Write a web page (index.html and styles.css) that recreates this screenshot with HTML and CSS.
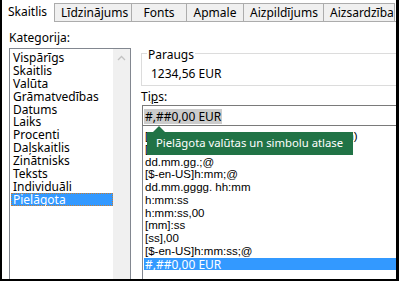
FILE: index.html
```html
<!DOCTYPE html>
<html lang="lv">
<head>
<meta charset="utf-8">
<link rel="stylesheet" href="styles.css">
</head>
<body>
<div class="frame">
  <div class="tabs">
    <div class="tab active">Skaitlis</div>
    <div class="tab">Līdzinājums</div>
    <div class="tab">Fonts</div>
    <div class="tab">Apmale</div>
    <div class="tab">Aizpildījums</div>
    <div class="tab">Aizsardzība</div>
    <div class="tab-rest"></div>
  </div>
  <div class="content">
    <div class="left">
      <div class="label">Kategori<u>j</u>a:</div>
      <div class="catbox">
        <ul class="cats">
          <li>Vispārīgs</li>
          <li>Skaitlis</li>
          <li>Valūta</li>
          <li>Grāmatvedības</li>
          <li>Datums</li>
          <li>Laiks</li>
          <li>Procenti</li>
          <li>Daļskaitlis</li>
          <li>Zinātnisks</li>
          <li>Teksts</li>
          <li>Individuāli</li>
          <li class="sel">Pielāgota</li>
        </ul>
        <div class="scroll">
          <svg class="arrow" width="9" height="6" viewBox="0 0 9 6"><path d="M1 5 L4.5 1.5 L8 5" fill="none" stroke="#c2c2c2" stroke-width="1.3"/></svg>
        </div>
      </div>
    </div>
    <div class="right">
      <div class="sample">
        <div class="sample-head"><span class="sample-title">Paraugs</span></div>
        <div class="sample-body">1234,56 EUR</div>
      </div>
      <div class="label tips">Ti<u>p</u>s:</div>
      <div class="input"><span class="hl">#,##0,00 EUR</span></div>
      <div class="fmtbox">
        <ul class="fmts">
          <li>[$-426]dddd, d. mmmm yyyy. (ddd, h:mm)</li>
          <li>[$-en-US]d-mmm-yy;@</li>
          <li>dd.mm.gg.;@</li>
          <li>[$-en-US]h:mm;@</li>
          <li>dd.mm.gggg. hh:mm</li>
          <li>h:mm:ss</li>
          <li>h:mm:ss,00</li>
          <li>[mm]:ss</li>
          <li>[ss],00</li>
          <li>[$-en-US]h:mm:ss;@</li>
          <li class="sel">#,##0,00 EUR</li>
        </ul>
        <div class="tooltip">Pielāgota valūtas un simbolu atlase</div>
      </div>
    </div>
  </div>
</div>
</body>
</html>
```

FILE: styles.css
```css
* { box-sizing: border-box; }
html, body { margin: 0; padding: 0; }
body {
  width: 399px;
  height: 281px;
  overflow: hidden;
  background: #fff;
  font-family: "Noto Sans", "Open Sans", sans-serif;
  font-size: 12px;
  color: #000;
}
.frame {
  width: 399px;
  height: 281px;
  border-left: 2px solid #000;
  border-right: 3px solid #000;
  border-bottom: 2px solid #000;
  display: flex;
  flex-direction: column;
  overflow: hidden;
}
.tabs {
  display: flex;
  height: 22px;
  flex: none;
}
.tab {
  height: 19px;
  margin-top: 3px;
  border: 1px solid #acacac;
  border-left: none;
  background: #f0f0f0;
  padding: 0 6px;
  line-height: 17px;
  text-align: center;
  white-space: nowrap;
  flex: none;
}
.tab:nth-child(2) { border-left: 1px solid #acacac; width: 78px; }
.tab:nth-child(3) { width: 55px; }
.tab:nth-child(4) { width: 57px; }
.tab:nth-child(5) { width: 80px; }
.tab:nth-child(6) { width: 71px; }
.tab.active {
  width: 52px;
  height: 22px;
  margin-top: 0;
  border: none;
  background: #fff;
  line-height: 24px;
  padding: 0 0 0 6px;
  text-align: left;
}
.tab-rest {
  flex: 1;
  border-bottom: 1px solid #acacac;
  height: 22px;
}
.content {
  flex: 1;
  display: flex;
  min-height: 0;
}
.left {
  width: 138px;
  padding-left: 7px;
  display: flex;
  flex-direction: column;
  flex: none;
}
.label {
  height: 26px;
  padding-top: 8px;
  line-height: 16px;
}
.catbox {
  flex: 1;
  width: 122px;
  border: 1px solid #828790;
  border-bottom: none;
  display: flex;
}
.cats {
  list-style: none;
  margin: 0;
  padding: 2px 0 0 1px;
  flex: 1;
}
.cats li {
  height: 12.9px;
  line-height: 13px;
  padding-left: 2px;
}
.cats li.sel {
  background: #3399ff;
  color: #fff;
  outline: 1px dotted #c87d32;
  outline-offset: -1px;
}
.scroll {
  width: 17px;
  background: #f0f0f0;
  display: flex;
  justify-content: center;
  padding-top: 6px;
}
.arrow { display: block; }
.right {
  flex: 1;
  padding-left: 1px;
  display: flex;
  flex-direction: column;
  min-width: 0;
}
.sample {
  margin: 26px -10px 0 0;
  flex: none;
}
.sample-head {
  display: flex;
  height: 14px;
}
.sample-head::before {
  content: "";
  width: 5px;
  height: 8px;
  align-self: flex-end;
  border-top: 1px solid #dcdcdc;
  border-left: 1px solid #dcdcdc;
  flex: none;
}
.sample-head::after {
  content: "";
  flex: 1;
  height: 8px;
  align-self: flex-end;
  border-top: 1px solid #dcdcdc;
  border-right: 1px solid #dcdcdc;
}
.sample-title {
  line-height: 14px;
  padding: 0 1px;
}
.sample-body {
  height: 24px;
  border: 1px solid #dcdcdc;
  border-top: none;
  padding: 4px 0 0 9px;
  line-height: 16px;
}
.tips {
  height: 19px;
  padding-top: 3px;
  line-height: 16px;
}
.input {
  height: 21px;
  border: 1px solid #7a7a7a;
  border-right: none;
  margin-left: 1px;
  padding: 2px 1px;
  flex: none;
}
.hl {
  background: #cccccc;
  display: inline-block;
  line-height: 15px;
  padding: 0 1px;
}
.fmtbox {
  flex: 1;
  position: relative;
  border-left: 1px solid #828790;
  margin-left: 1px;
  overflow: hidden;
}
.fmts {
  list-style: none;
  margin: 0;
  padding: 4px 0 0 1px;
  font-family: "Liberation Sans", Arial, sans-serif;
  font-size: 11.5px;
}
.fmts li {
  height: 12.75px;
  line-height: 13px;
  padding-left: 1px;
  white-space: nowrap;
}
.fmts li.sel {
  background: #3399ff;
  color: #fff;
  font-family: "Noto Sans", sans-serif;
  font-size: 12px;
}
.tooltip {
  position: absolute;
  left: 4px;
  top: 6px;
  width: 206px;
  height: 23px;
  background: #217346;
  color: #fff;
  font-size: 11.3px;
  line-height: 22px;
  padding-left: 9px;
  white-space: nowrap;
}
.tooltip::before {
  content: "";
  position: absolute;
  left: 6px;
  top: -6px;
  border-left: 6px solid transparent;
  border-right: 6px solid transparent;
  border-bottom: 6px solid #217346;
}
```
